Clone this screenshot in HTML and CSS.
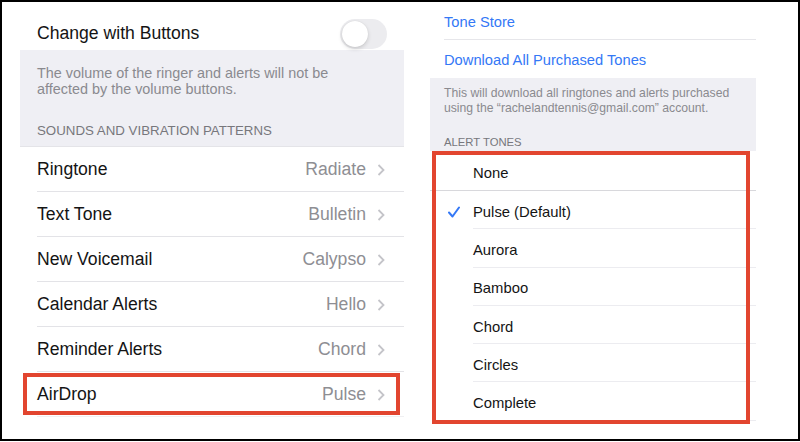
FILE: index.html
```
<!DOCTYPE html>
<html lang="en">
<head>
  <meta charset="UTF-8">
  <title>Sounds &amp; Haptics</title>
  <link rel="stylesheet" href="styles.css">
</head>
<body>
  <div class="frame">

    <!-- Left: Sounds settings -->
    <section class="panel panel-left">
      <div class="top-row">
        <span class="label">Change with Buttons</span>
        <span class="switch"><span class="knob"></span></span>
      </div>

      <div class="gray-block">
        <p class="foot">The volume of the ringer and alerts will not be<br>affected by the volume buttons.</p>
        <div class="head">SOUNDS AND VIBRATION PATTERNS</div>
      </div>

      <ul class="list">
        <li class="cell"><span class="label">Ringtone</span><span class="value">Radiate</span><svg class="chev" viewBox="0 0 8 12"><polyline points="1.5,1 6.5,6 1.5,11"/></svg></li>
        <li class="cell"><span class="label">Text Tone</span><span class="value">Bulletin</span><svg class="chev" viewBox="0 0 8 12"><polyline points="1.5,1 6.5,6 1.5,11"/></svg></li>
        <li class="cell"><span class="label">New Voicemail</span><span class="value">Calypso</span><svg class="chev" viewBox="0 0 8 12"><polyline points="1.5,1 6.5,6 1.5,11"/></svg></li>
        <li class="cell"><span class="label">Calendar Alerts</span><span class="value">Hello</span><svg class="chev" viewBox="0 0 8 12"><polyline points="1.5,1 6.5,6 1.5,11"/></svg></li>
        <li class="cell"><span class="label">Reminder Alerts</span><span class="value">Chord</span><svg class="chev" viewBox="0 0 8 12"><polyline points="1.5,1 6.5,6 1.5,11"/></svg></li>
        <li class="cell marked"><span class="label">AirDrop</span><span class="value">Pulse</span><svg class="chev" viewBox="0 0 8 12"><polyline points="1.5,1 6.5,6 1.5,11"/></svg></li>
      </ul>
    </section>

    <!-- Right: AirDrop tone picker -->
    <section class="panel panel-right">
      <ul class="links">
        <li class="link">Tone Store</li>
        <li class="link">Download All Purchased Tones</li>
      </ul>

      <div class="gray-block small">
        <p class="foot">This will download all ringtones and alerts purchased<br>using the “rachelandtennis@gmail.com” account.</p>
        <div class="head">ALERT TONES</div>
      </div>

      <ul class="tones">
        <li class="tone first"><span class="tick"></span><span class="name">None</span></li>
        <li class="tone"><span class="tick"><svg viewBox="0 0 12 12"><polyline points="1,6.5 4.5,10.5 11,1.5"/></svg></span><span class="name">Pulse (Default)</span></li>
        <li class="tone"><span class="tick"></span><span class="name">Aurora</span></li>
        <li class="tone"><span class="tick"></span><span class="name">Bamboo</span></li>
        <li class="tone"><span class="tick"></span><span class="name">Chord</span></li>
        <li class="tone"><span class="tick"></span><span class="name">Circles</span></li>
        <li class="tone"><span class="tick"></span><span class="name">Complete</span></li>
      </ul>
    </section>

  </div>
</body>
</html>
```

FILE: styles.css
```
body {
  margin: 0;
  padding: 0;
  background: #fff;
  font-family: "Liberation Sans", Arial, sans-serif;
  color: #141414;
}

.frame {
  box-sizing: border-box;
  width: 800px;
  height: 441px;
  border: 2px solid #000;
  display: flex;
  align-items: flex-start;
}

ul {
  list-style: none;
  margin: 0;
  padding: 0;
}

p {
  margin: 0;
}

/* ---------- left panel ---------- */

.panel-left {
  width: 384px;
  margin-left: 18px;
  padding-top: 14px;
}

.top-row {
  box-sizing: border-box;
  height: 34px;
  display: flex;
  align-items: center;
  justify-content: space-between;
  padding: 1px 17px 0;
}

.label {
  font-size: 17.6px;
}

.switch {
  box-sizing: border-box;
  width: 47px;
  height: 30px;
  border-radius: 15px;
  background: #ececef;
  padding: 2px;
  display: flex;
  align-items: center;
}

.knob {
  width: 26px;
  height: 26px;
  border-radius: 50%;
  background: #fff;
  box-shadow: 0 2px 4px rgba(0, 0, 0, 0.15), 0 0 1px rgba(0, 0, 0, 0.12);
}

.gray-block {
  background: #efeff4;
  padding: 15px 17px 7px;
  border-bottom: 1px solid #e4e4e8;
}

.gray-block .foot {
  font-size: 14.4px;
  line-height: 16px;
  color: #8a8a8f;
  margin-bottom: 26px;
}

.gray-block .head {
  font-size: 13.3px;
  line-height: 16px;
  color: #77777c;
}

.cell {
  box-sizing: border-box;
  height: 45px;
  margin-left: 17px;
  padding-right: 19px;
  padding-top: 1px;
  border-bottom: 1px solid #e3e3e7;
  display: flex;
  align-items: center;
}

.cell .label {
  flex: 1;
}

.cell .value {
  font-size: 17.6px;
  color: #8e8e93;
  margin-right: 11px;
}

.chev {
  width: 8px;
  height: 12px;
  fill: none;
  stroke: #c4c4c9;
  stroke-width: 1.8;
}

.cell.marked {
  position: relative;
  border-bottom-color: #f0f0f2;
}

.cell.marked::after {
  content: "";
  position: absolute;
  top: 1px;
  bottom: 1px;
  left: -14px;
  right: 4px;
  border: 4px solid #e2452f;
}

/* ---------- right panel ---------- */

.panel-right {
  width: 326px;
  margin-left: 26px;
}

.link {
  box-sizing: border-box;
  height: 38px;
  margin-left: 14px;
  padding-top: 2px;
  display: flex;
  align-items: center;
  font-size: 14.7px;
  color: #3478f6;
}

.link:first-child {
  border-bottom: 1px solid #e6e6ea;
}

.gray-block.small {
  padding: 8px 14px 2px;
  border-bottom: none;
}

.gray-block.small .foot {
  font-size: 12.2px;
  line-height: 15px;
  margin-bottom: 19px;
}

.gray-block.small .head {
  font-size: 11.3px;
  line-height: 14px;
}

.tones {
  position: relative;
}

.tones::after {
  content: "";
  position: absolute;
  top: 0;
  bottom: -3px;
  left: 2px;
  right: 6px;
  border: 4px solid #e2452f;
}

.tone {
  display: flex;
  height: 38.3px;
  font-size: 14.8px;
}

.tone.first {
  box-sizing: border-box;
  height: 40px;
  border-bottom: 1px solid #d8d8dc;
}

.tick {
  width: 43px;
  flex-shrink: 0;
  display: flex;
  align-items: center;
  padding: 4px 0 0 18px;
  box-sizing: border-box;
}

.tick svg {
  width: 12px;
  height: 12px;
  fill: none;
  stroke: #3478f6;
  stroke-width: 2;
  stroke-linecap: round;
  stroke-linejoin: round;
}

.name {
  flex: 1;
  display: flex;
  align-items: center;
  padding-top: 4px;
  border-bottom: 1px solid #ececf0;
}

.tone.first .name {
  border-bottom: none;
}
```
